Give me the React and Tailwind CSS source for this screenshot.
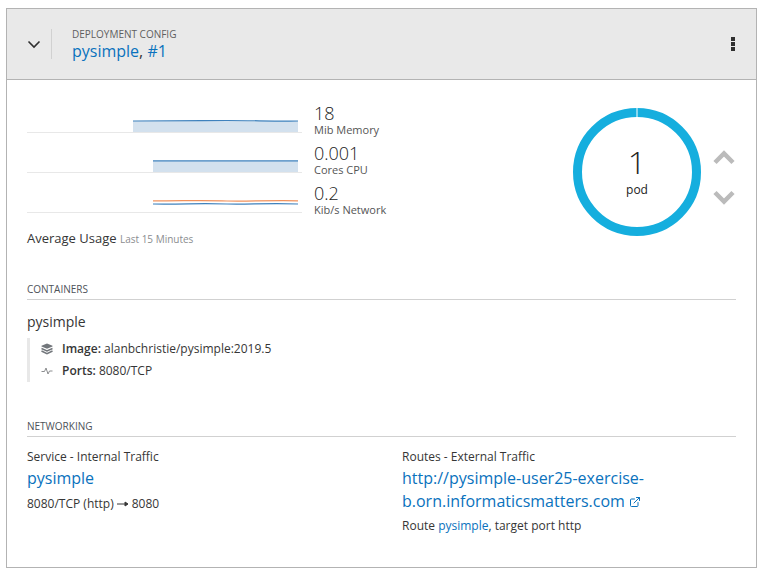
import React from 'react';
import { ExternalLink } from 'lucide-react';

const Sparkline = ({ start, top, lines, filled }) => (
  <svg width="275" height="40" viewBox="0 0 275 40" className="block shrink-0">
    {filled && <path d={`M${start} ${top} L271 ${top} L271 39 L${start} 39 Z`} fill="#d3e1ee" />}
    {lines.map((line) => (
      <path key={line.color} d={line.d} fill="none" stroke={line.color} strokeWidth="1.2" />
    ))}
    <line x1="0" y1="39.5" x2="275" y2="39.5" stroke="#e8e8e8" strokeWidth="1" />
  </svg>
);

const Metric = ({ value, label, children }) => (
  <div className="flex h-10 items-start">
    {children}
    <div className="ml-[12px] mt-[13px]">
      <div className="text-[18px] leading-[14px] font-light text-[#222]">{value}</div>
      <div className="mt-[4px] text-[11px] leading-[12px] text-[#555]">{label}</div>
    </div>
  </div>
);

const SectionHeading = ({ children }) => (
  <div className="border-b border-[#d1d1d1] pb-[3px] text-[10px] leading-[14px] text-[#4d5258]">{children}</div>
);

const App = () => {
  return (
    <div className="h-[575px] bg-white pt-2 pl-[6px] font-['Open_Sans',sans-serif]">
      <div className="h-[560px] w-[751px] border border-[#b3b3b3] bg-white">
        <div className="flex h-[71px] items-center border-b border-[#b3b3b3] bg-[#e9e9e9] pr-[21px]">
          <div className="flex h-[30px] w-[45px] items-center justify-end border-r border-[#d1d1d1] pr-[10px]">
            <svg width="14" height="14" viewBox="0 0 14 14">
              <path d="M1.5 4.5 L7 10 L12.5 4.5" fill="none" stroke="#2f2f2f" strokeWidth="1.6" />
            </svg>
          </div>
          <div className="ml-[20px] flex-1">
            <div className="text-[10px] leading-[14px] text-[#5f5f5f]">DEPLOYMENT CONFIG</div>
            <div className="text-[16px] leading-[20px] text-[#0a72bd]">
              pysimple<span className="text-[#363636]">,</span> #1
            </div>
          </div>
          <div className="flex flex-col gap-[1px]">
            <span className="h-1 w-1 bg-[#2f2f2f]" />
            <span className="h-1 w-1 bg-[#2f2f2f]" />
            <span className="h-1 w-1 bg-[#2f2f2f]" />
          </div>
        </div>

        <div className="px-5">
          <div className="flex h-[202px] items-start">
            <div className="w-[400px] pt-[13px]">
              <Metric value="18" label="Mib Memory">
                <Sparkline
                  start={106}
                  top={28}
                  filled
                  lines={[{ color: '#3f82bd', d: 'M106 28 C150 28 170 27.5 200 27.5 C230 27.5 240 28.2 271 28' }]}
                />
              </Metric>
              <Metric value="0.001" label="Cores CPU">
                <Sparkline
                  start={126}
                  top={28}
                  filled
                  lines={[{ color: '#3f82bd', d: 'M126 27.8 L271 27.8' }]}
                />
              </Metric>
              <Metric value="0.2" label="Kib/s Network">
                <Sparkline
                  start={126}
                  top={28}
                  lines={[
                    { color: '#f2925c', d: 'M126 27.8 C160 27.8 180 27 200 28 C220 28.6 240 27.2 271 27.8' },
                    { color: '#3f82bd', d: 'M126 31 C160 31.4 170 30 200 31 C220 31.6 240 30 271 31' },
                  ]}
                />
              </Metric>
              <div className="mt-[16px] text-[13px] leading-[18px] text-[#363636]">
                Average Usage <span className="text-[10px] text-[#8b8d8f]">Last 15 Minutes</span>
              </div>
            </div>

            <div className="ml-[146px] mt-[28px] flex items-center">
              <div className="relative h-[128px] w-[128px]">
                <svg width="128" height="128" viewBox="0 0 128 128" className="block">
                  <circle cx="64" cy="64" r="59.5" fill="none" stroke="#15aede" strokeWidth="9" />
                  <rect x="63.5" y="0" width="1" height="9" fill="#fff" />
                </svg>
                <div className="absolute inset-0 flex flex-col items-center pt-[36px] text-[#222]">
                  <div className="text-[32px] leading-[36px] font-light">1</div>
                  <div className="mt-[2px] text-[12px] leading-[16px]">pod</div>
                </div>
              </div>
              <div className="ml-[12px] flex flex-col gap-[21px] pt-[10px]">
                <svg width="22" height="19" viewBox="0 0 22 19" className="block">
                  <path d="M2 14.5 L11 5.5 L20 14.5" fill="none" stroke="#bbb" strokeWidth="4.5" />
                </svg>
                <svg width="22" height="19" viewBox="0 0 22 19" className="block">
                  <path d="M2 4.5 L11 13.5 L20 4.5" fill="none" stroke="#bbb" strokeWidth="4.5" />
                </svg>
              </div>
            </div>
          </div>

          <SectionHeading>CONTAINERS</SectionHeading>
          <div className="mt-[12px] text-[14px] leading-[20px] text-[#363636]">pysimple</div>
          <div className="mt-[6px] border-l-[3px] border-[#e8e8e8] pl-[11px] text-[12px] text-[#363636]">
            <div className="flex h-[22px] items-center">
              <svg width="12" height="12" viewBox="0 0 12 12" className="shrink-0">
                <path d="M6 0.5 L11.5 2.8 L11.5 3.4 L6 5.7 L0.5 3.4 L0.5 2.8 Z" fill="#72767b" />
                <path d="M0.5 5.5 L6 7.9 L11.5 5.5 M0.5 8 L6 10.6 L11.5 8" fill="none" stroke="#72767b" strokeWidth="1.5" />
              </svg>
              <span className="ml-[9px]"><span className="font-semibold">Image:</span> alanbchristie/pysimple:2019.5</span>
            </div>
            <div className="flex h-[22px] items-center">
              <svg width="12" height="12" viewBox="0 0 12 12" className="shrink-0">
                <path d="M0.5 6.5 L3.5 6.5 L5 3 L7 9 L8.5 6 L11.5 6" fill="none" stroke="#8b8d8f" strokeWidth="1" />
              </svg>
              <span className="ml-[9px]"><span className="font-semibold">Ports:</span> 8080/TCP</span>
            </div>
          </div>

          <div className="mt-[37px]">
            <SectionHeading>NETWORKING</SectionHeading>
          </div>
          <div className="mt-[11px] grid grid-cols-[375px_1fr] text-[#363636]">
            <div>
              <div className="text-[12px] leading-[18px]">Service - Internal Traffic</div>
              <div className="mt-[1px] text-[16px] leading-[23px] text-[#0a72bd]">pysimple</div>
              <div className="mt-[5px] flex items-center text-[12px] leading-[18px]">
                8080/TCP (http)
                <svg width="12" height="8" viewBox="0 0 12 8" className="mx-[3px] shrink-0">
                  <path d="M0 4 L10 4 M8 2 L11 4 L8 6 Z" fill="#363636" stroke="#363636" strokeWidth="1" />
                </svg>
                8080
              </div>
            </div>
            <div>
              <div className="text-[12px] leading-[18px]">Routes - External Traffic</div>
              <div className="mt-[1px] w-[260px] text-[16px] leading-[23px] text-[#0a72bd]">
                http://pysimple-user25-exercise-b.orn.informaticsmatters.com{' '}
                <ExternalLink size={12} className="inline-block align-[-1px]" />
              </div>
              <div className="mt-[4px] text-[12px] leading-[18px]">
                Route <span className="text-[#0a72bd]">pysimple</span>, target port http
              </div>
            </div>
          </div>
        </div>
      </div>
    </div>
  );
};

export default App;
